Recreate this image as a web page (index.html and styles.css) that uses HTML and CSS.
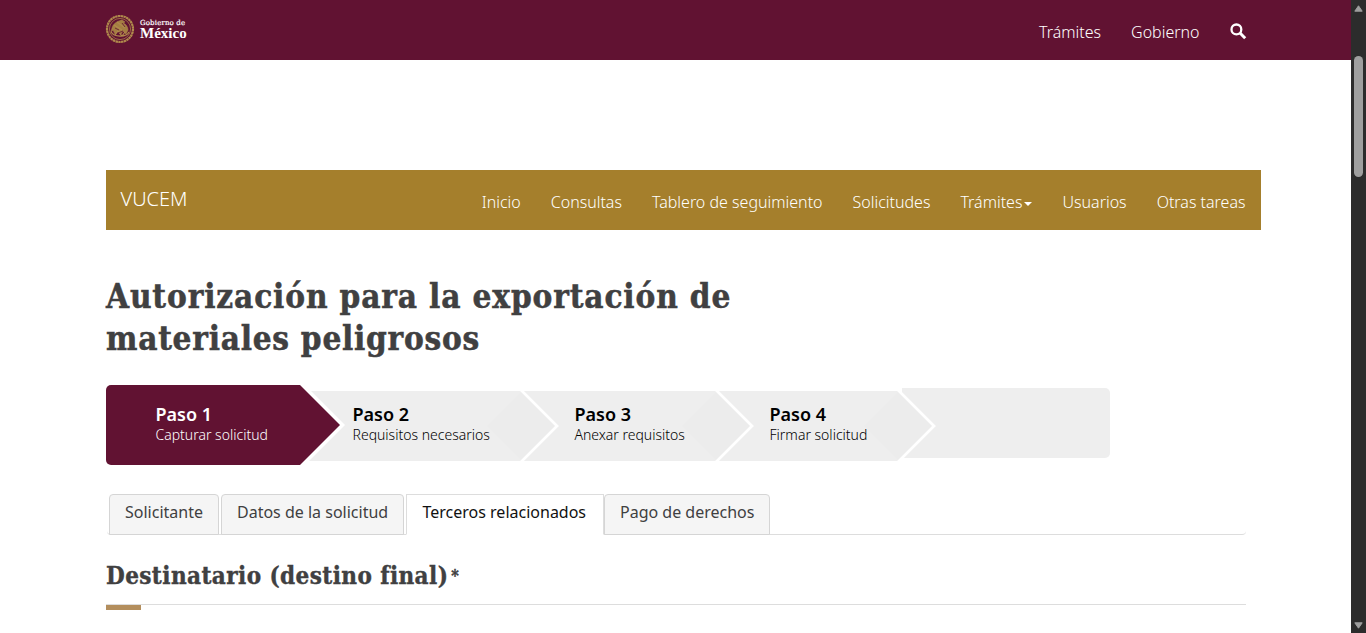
FILE: index.html
```html
<!DOCTYPE html>
<html lang="es">
<head>
<meta charset="utf-8">
<title>VUCEM</title>
<link rel="stylesheet" href="styles.css">
</head>
<body>
<div class="page">
  <header class="topbar">
    <div class="logo">
      <svg class="seal" viewBox="0 0 30 30" fill="none" stroke="#b08a4c">
        <circle cx="15" cy="15" r="13" stroke-width="2.2" stroke-dasharray="2.4 .4"/>
        <circle cx="15" cy="15" r="10.6" stroke-width=".7"/>
        <path d="M7 14c1-4 4-6 7-7l3-1 3 2-2 1c3 1 5 4 5 7l-2 4-3-3-2 3-3-3-3 3-2-4-2 2z" fill="#a47e42" stroke-width=".5"/>
        <path d="M6 18c3 5 15 6 18 0M10 21l3-4 4 5 3-4M9 11l8 5M12 8l8 6" stroke-width="1.2"/>
        <path d="M10 14l4 2M17 9l3 4M13 19l5-2" stroke="#611232" stroke-width=".8"/>
      </svg>
      <div class="wordmark"><span class="gob">Gobierno de</span><span class="mex">México</span></div>
    </div>
    <nav class="topnav">
      <a>Trámites</a><a>Gobierno</a>
      <svg class="search" viewBox="0 0 17 17" fill="none" stroke="#fff"><circle cx="6.4" cy="6.4" r="4.9" stroke-width="2.3"/><path d="M10 10l5.2 5.2" stroke-width="3"/></svg>
    </nav>
  </header>
  <main class="content">
    <div class="subbar">
      <span class="brand">VUCEM</span>
      <nav class="menu"><a>Inicio</a><a>Consultas</a><a>Tablero de seguimiento</a><a>Solicitudes</a><a>Trámites<i class="caret"></i></a><a>Usuarios</a><a>Otras tareas</a></nav>
    </div>
    <h1 class="title"><span class="l1">Autorización para la exportación de</span><br><span class="l2">materiales peligrosos</span></h1>
    <div class="steps">
      <div class="step s1"><b>Paso 1</b><span>Capturar solicitud</span><svg class="tip" viewBox="0 0 46 80"><path d="M0 -5L45 40L0 85" fill="#fff"/><path d="M0 0L40 40L0 80" fill="#611232"/></svg></div>
      <div class="step s2"><b>Paso 2</b><span>Requisitos necesarios</span><svg class="chev" viewBox="0 0 76 70"><path d="M2 35L36 1H38L71 35L38 69H36z" fill="#ececec"/><path d="M36 -1L72 35L36 71" fill="none" stroke="#fff" stroke-width="2.8"/></svg></div>
      <div class="step s3"><b>Paso 3</b><span>Anexar requisitos</span><svg class="chev" viewBox="0 0 76 70"><path d="M2 35L36 1H38L71 35L38 69H36z" fill="#ececec"/><path d="M36 -1L72 35L36 71" fill="none" stroke="#fff" stroke-width="2.8"/></svg></div>
      <div class="step s4"><b>Paso 4</b><span>Firmar solicitud</span><svg class="chev" viewBox="0 0 76 70"><path d="M2 35L36 1H38L71 35L38 69H36z" fill="#ececec"/><path d="M36 -1L72 35L36 71" fill="none" stroke="#fff" stroke-width="2.8"/></svg></div>
      <div class="step rest"></div>
    </div>
    <div class="tabs"><a class="t1">Solicitante</a><a class="t2">Datos de la solicitud</a><a class="t3 on">Terceros relacionados</a><a class="t4">Pago de derechos</a></div>
    <h2 class="section"><span>Destinatario (destino final)</span><sup>*</sup></h2>
  </main>
</div>
<div class="scroll">
  <svg viewBox="0 0 9 7"><path d="M4.5 .8L8.2 6.2H.8z" fill="#9f9f9f" stroke="#9f9f9f" stroke-linejoin="round"/></svg>
  <div class="thumb"></div>
  <svg class="down" viewBox="0 0 9 7"><path d="M4.5 6.2L8.2 .8H.8z" fill="#9f9f9f" stroke="#9f9f9f" stroke-linejoin="round"/></svg>
</div>
</body>
</html>
```
FILE: styles.css
```css
* { box-sizing: border-box; }
body { margin: 0; height: 633px; overflow: hidden; display: flex; background: #fff; font: 300 16px/24px "Noto Sans", sans-serif; color: #404041; }
.page { width: 1351px; flex: none; }
.topbar { height: 60px; background: #611232; padding: 0 104.5px 0 105px; display: flex; justify-content: space-between; color: #fff; }
.logo { display: flex; padding-top: 14px; gap: 5px; }
.seal { width: 30px; height: 30px; }
.wordmark { font-family: "DejaVu Serif", serif; font-weight: 700; padding-top: 6px; display: flex; flex-direction: column; white-space: nowrap; }
.gob { font-size: 7px; line-height: 7px; letter-spacing: .15px; font-weight: 400; -webkit-text-stroke: .2px #fff; }
.mex { font-family: "Liberation Serif", serif; font-size: 15px; line-height: 12px; }
.topnav { display: flex; gap: 30px; padding-top: 20px; }
.search { width: 17px; height: 17px; margin-top: 3px; }
.content { margin-left: 106px; width: 1155px; padding-top: 110px; }
.subbar { height: 60px; background: #a57f2c; color: #fff; display: flex; justify-content: space-between; padding: 0 15.5px 0 14.5px; }
.brand { font-size: 20px; line-height: 58px; }
.menu { display: flex; gap: 30px; line-height: 64px; white-space: nowrap; }
.caret { display: inline-block; border: 4px solid transparent; border-top-color: #fff; border-bottom: 0; margin-left: 2px; vertical-align: 2px; }
.title { margin: 46px 0 0; font: 700 33px/42px "DejaVu Serif Condensed", "DejaVu Serif", serif; white-space: nowrap; -webkit-text-stroke: .5px #404041; }
.l1 { letter-spacing: .87px; }
.l2 { letter-spacing: .75px; }
.steps { display: flex; height: 80px; margin-top: 25px; align-items: flex-start; color: #000; }
.step { position: relative; height: 70px; margin-top: 6px; background: #eee; display: flex; flex-direction: column; padding-top: 11px; white-space: nowrap; }
.step b { font-size: 18px; line-height: 24px; font-weight: 600; }
.step span { font-size: 14px; line-height: 17px; }
.s1 { width: 194px; height: 80px; margin-top: 0; padding: 17px 0 0 49.5px; background: #611232; color: #fff; border-radius: 5px 0 0 5px; z-index: 4; }
.s2 { width: 223px; padding-left: 52.5px; z-index: 3; }
.s3 { width: 195px; padding-left: 51.5px; z-index: 2; }
.s4 { width: 182px; padding-left: 51.5px; z-index: 1; }
.rest { width: 208px; margin: 3px 0 0 2px; border-radius: 0 5px 5px 0; }
.tip { position: absolute; left: 194px; top: 0; width: 46px; height: 80px; }
.chev { position: absolute; right: -38px; top: 0; width: 76px; height: 70px; }
.step b, .step span { position: relative; z-index: 2; }
.tabs { display: flex; width: 1139px; height: 41px; margin: 29px 0 0 1px; padding-left: 2px; border-bottom: 1px solid #ddd; border-radius: 0 0 4px 4px; font-weight: 400; white-space: nowrap; }
.tabs a { height: 41px; border: 1px solid #d5d5d5; border-radius: 4px 4px 0 0; background: #f5f5f5; line-height: 35px; padding-left: 15px; margin-right: 2px; }
.tabs .t1 { width: 110px; }
.tabs .t2 { width: 183px; }
.tabs .t3 { width: 198px; margin-right: 0; border-color: #ddd #ddd #fff; border-radius: 0; background: #fff; color: #111; padding-left: 15.5px; }
.tabs .t4 { width: 166px; }
.section { position: relative; margin: 22px 0 0; width: 1140px; height: 48px; border-bottom: 1px solid #ddd; font: 700 24px/37px "DejaVu Serif Condensed", "DejaVu Serif", serif; letter-spacing: .42px; white-space: nowrap; -webkit-text-stroke: .4px #404041; }
.section sup { font-size: 16px; line-height: 0; margin-left: 3px; vertical-align: 3px; }
.section::after { content: ""; position: absolute; left: 0; top: 48px; width: 35px; height: 5px; background: #b38e5d; }
.scroll { width: 15px; height: 633px; background: #2c2c2c; display: flex; flex-direction: column; align-items: center; padding: 5px 0 4px; }
.scroll svg { width: 9px; height: 7px; }
.scroll .down { margin-top: auto; }
.thumb { width: 9px; height: 121px; margin-top: 44px; border-radius: 5px; background: #9f9f9f; }
```
